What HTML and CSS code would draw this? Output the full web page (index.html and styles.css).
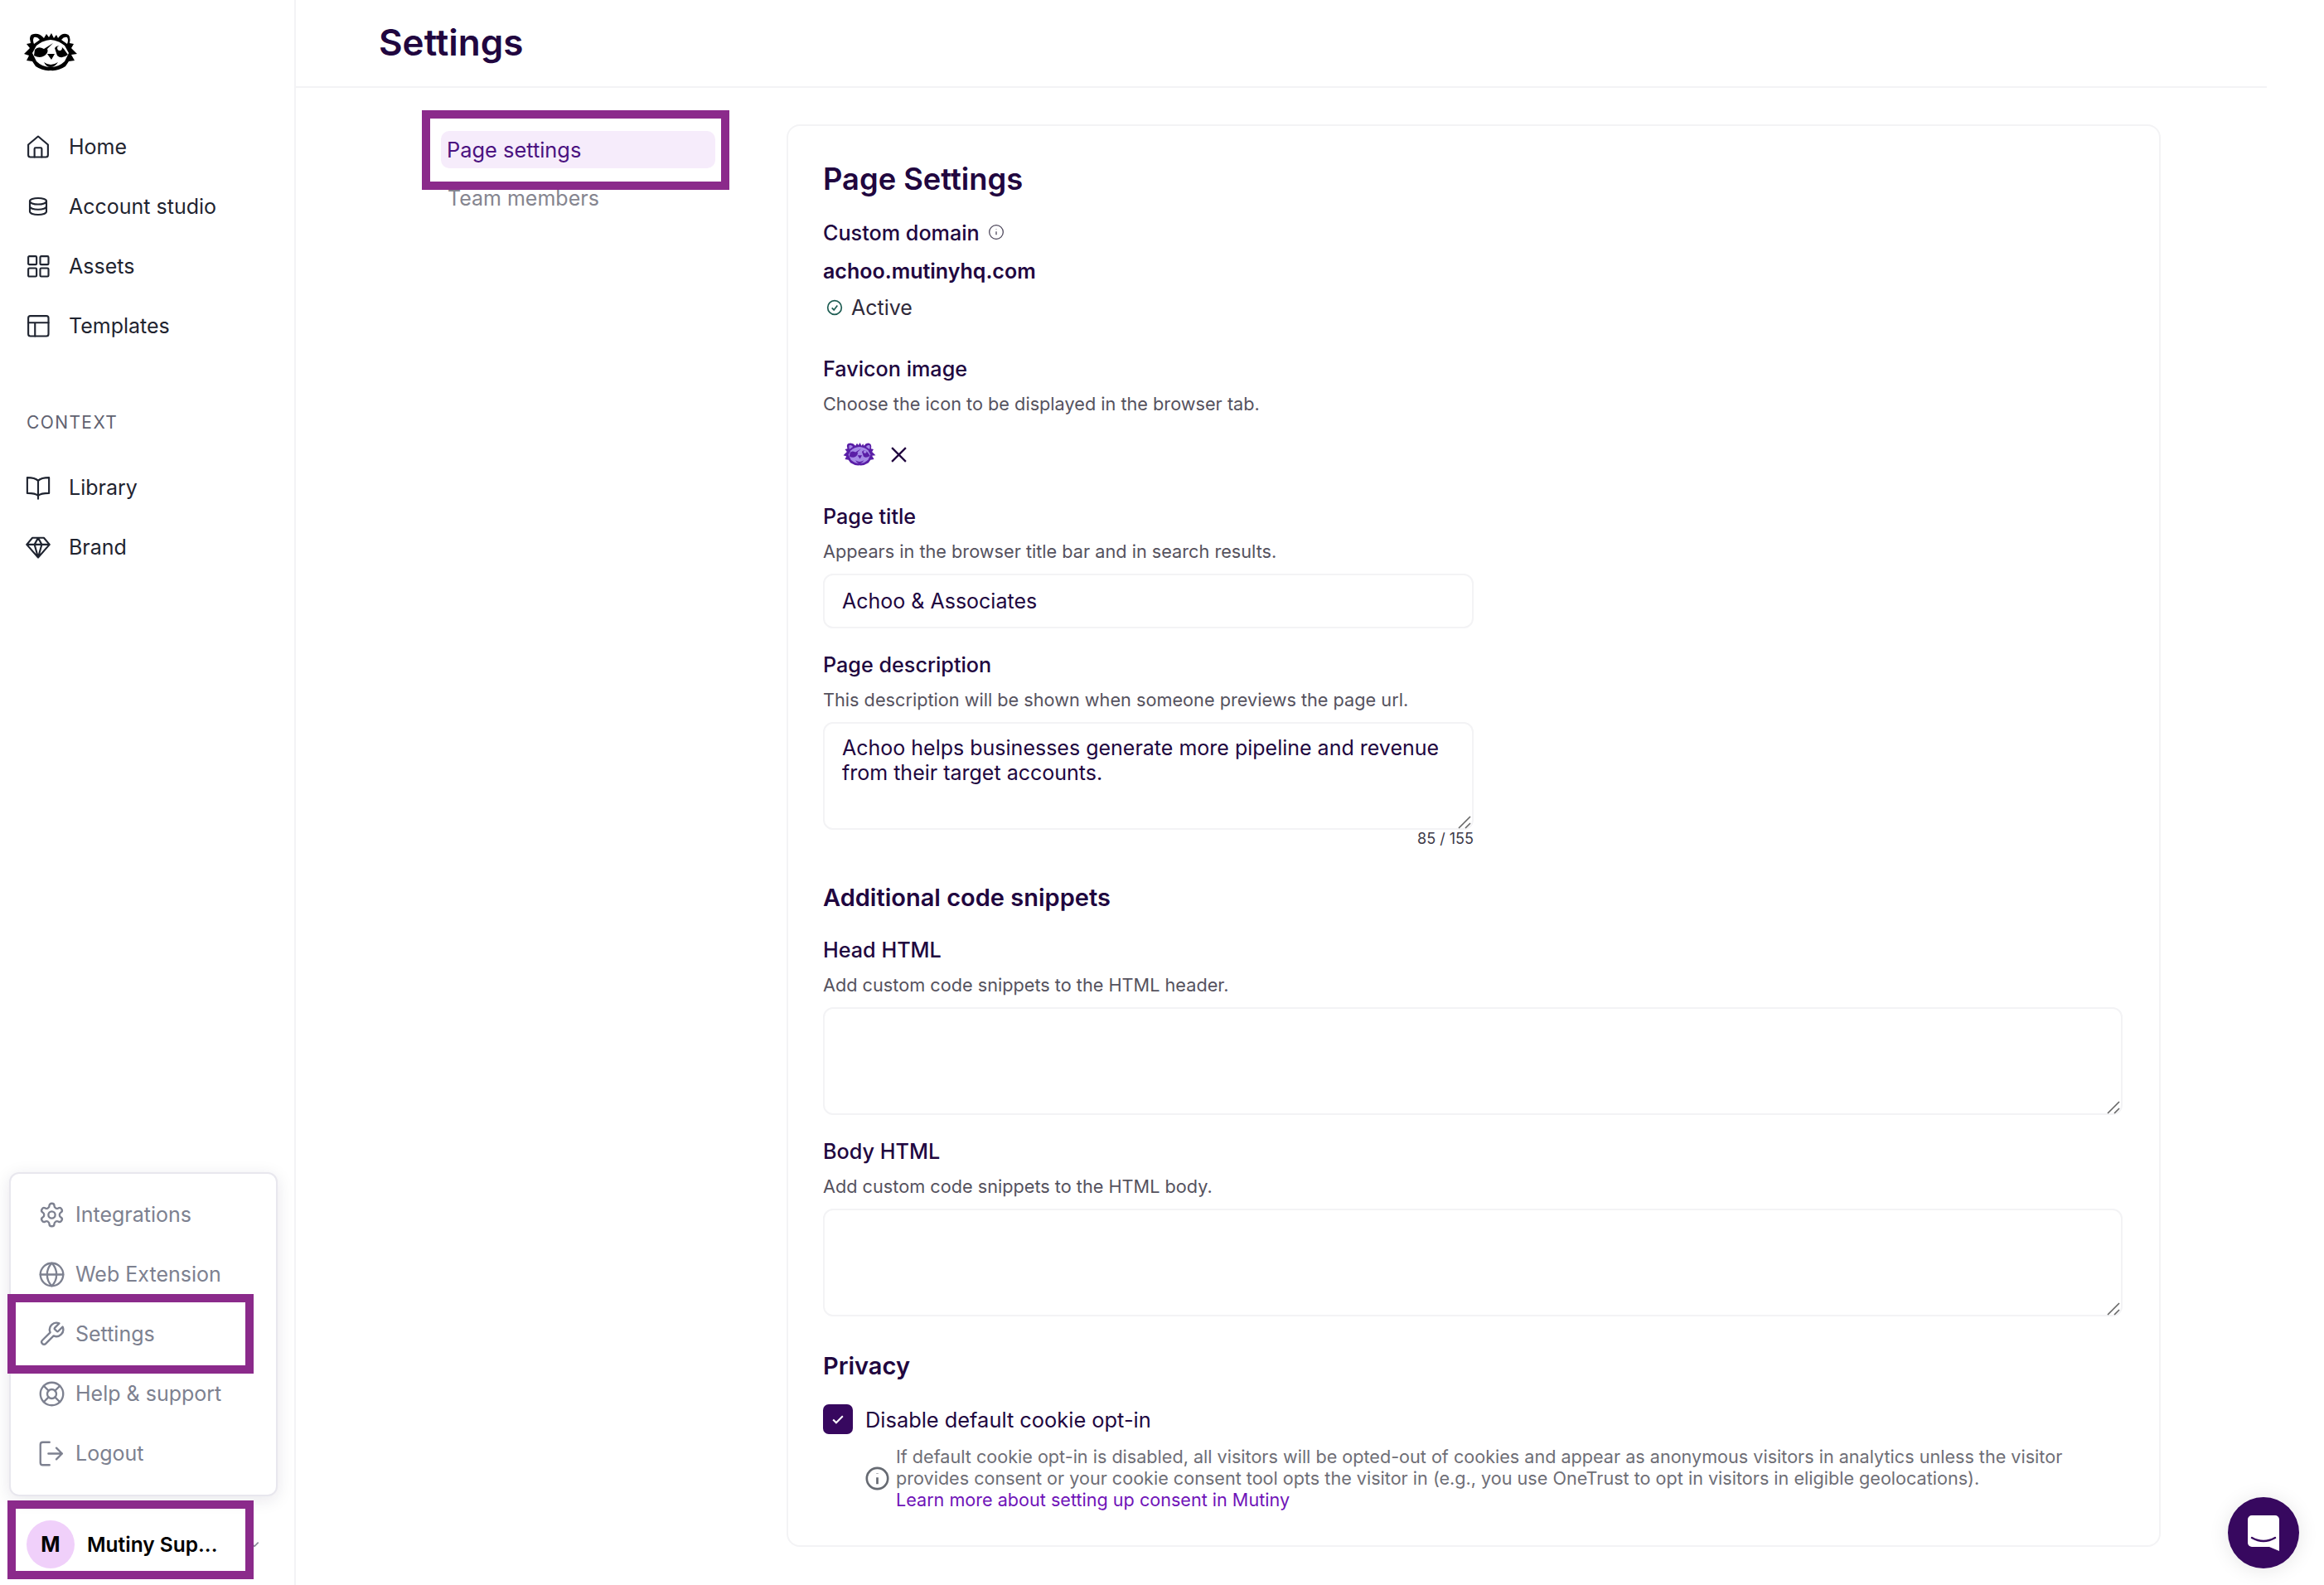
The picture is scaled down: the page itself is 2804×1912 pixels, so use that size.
FILE: index.html
```html
<!DOCTYPE html>
<html lang="en">
<head>
  <meta charset="UTF-8" />
  <meta name="viewport" content="width=device-width, initial-scale=1.0"/>
  <title>Settings</title>
  <link rel="stylesheet" href="styles.css">
</head>
<body>
  <svg class="defs" width="0" height="0">
    <symbol id="raccoon" viewBox="0 0 66 46">
      <path class="fur" d="M13 1Q8 1 8 7L9 12 4 13 8 18 1 25 7 27 4 33 11 34 15 40Q24 46 33 45 42 46 51 40L55 34 62 33 58 26 65 25 58 18 61 13 56 12Q58 2 52 1 46 0 42 6L40 2 37 6 34 0 31 5 28 1 25 6Q20 0 13 1Z"/>
      <path class="face" d="M16 15Q23 9 33 8 43 9 50 15L55 24 50 34Q43 41 33 41 23 41 16 34L11 24Z"/>
      <path class="face" d="M13 5Q11 8 13 13L20 8Q17 4 13 5ZM53 5Q55 8 53 13L46 8Q49 4 53 5Z"/>
      <path class="fur" d="M36 12 25 19Q18 15 14 20L13 27Q20 31 26 27 31 23 29 19ZM38 18Q42 12 49 19L54 26Q46 32 41 27Z"/>
      <path class="face" d="M41 18a3 3 0 1 1 0 .1Z"/>
      <path class="fur" d="M29 25H38L34 32ZM25 35Q33 41 42 35 38 41 33 41 28 41 25 35Z"/>
    </symbol>
  </svg>

  <div class="app">
    <aside class="sidebar">
      <svg class="logo"><use href="#raccoon"/></svg>

      <nav class="nav">
        <a class="nav-item">
          <svg class="icon" viewBox="0 0 24 24"><path d="M2.500 10 12 2l9.500 8v10a2 2 0 0 1-2 2h-15a2 2 0 0 1-2-2Z"/><path d="M8.500 22v-8a1 1 0 0 1 1-1h5a1 1 0 0 1 1 1v8"/></svg>
          Home
        </a>
        <a class="nav-item">
          <svg class="icon" viewBox="0 0 24 24"><ellipse cx="12" cy="7" rx="8" ry="3"/><path d="M4 7v10c0 1.700 3.600 3 8 3s8-1.300 8-3V7"/><path d="M4 12c0 1.700 3.600 3 8 3s8-1.300 8-3"/></svg>
          Account studio
        </a>
        <a class="nav-item">
          <svg class="icon" viewBox="0 0 24 24"><rect x="2.500" y="2.500" width="8" height="8" rx="1"/><rect x="14" y="2.500" width="8" height="8" rx="1"/><rect x="2.500" y="14" width="8" height="8" rx="1"/><rect x="14" y="14" width="8" height="8" rx="1"/></svg>
          Assets
        </a>
        <a class="nav-item">
          <svg class="icon" viewBox="0 0 24 24"><rect x="2.500" y="2.500" width="19.500" height="19.500" rx="2"/><path d="M2.500 9h19.500M9 9v13"/></svg>
          Templates
        </a>
      </nav>

      <div class="nav-heading">CONTEXT</div>

      <nav class="nav">
        <a class="nav-item">
          <svg class="icon" viewBox="0 0 24 24"><path d="M12 5.500C10 3.500 7 2.500 1.500 2.500v15c5.500 0 8.500.5 10.500 2.500 2-2 5-2.500 10.500-2.500v-15c-5.500 0-8.500 1-10.500 3ZM12 5.500V23"/></svg>
          Library
        </a>
        <a class="nav-item">
          <svg class="icon" viewBox="0 0 24 24"><path d="M6.500 3h11L23 9.500 12 22 1 9.500ZM1 9.500h22M8.500 9.500 12 22l3.500-12.500L12 3Z"/></svg>
          Brand
        </a>
      </nav>

      <div class="menu">
        <a class="menu-item">
          <svg class="icon" viewBox="0 0 24 24"><path d="M12.200 2h-.4a2 2 0 0 0-2 2v.2a2 2 0 0 1-1 1.700l-.4.300a2 2 0 0 1-2 0l-.2-.1a2 2 0 0 0-2.700.7l-.2.400a2 2 0 0 0 .7 2.700l.2.100a2 2 0 0 1 1 1.700v.6a2 2 0 0 1-1 1.700l-.2.100a2 2 0 0 0-.7 2.700l.2.400a2 2 0 0 0 2.700.7l.2-.1a2 2 0 0 1 2 0l.4.300a2 2 0 0 1 1 1.700v.2a2 2 0 0 0 2 2h.4a2 2 0 0 0 2-2v-.2a2 2 0 0 1 1-1.700l.4-.3a2 2 0 0 1 2 0l.2.100a2 2 0 0 0 2.700-.7l.2-.4a2 2 0 0 0-.7-2.700l-.2-.1a2 2 0 0 1-1-1.700v-.6a2 2 0 0 1 1-1.700l.2-.1a2 2 0 0 0 .7-2.700l-.2-.4a2 2 0 0 0-2.700-.7l-.2.100a2 2 0 0 1-2 0l-.4-.3a2 2 0 0 1-1-1.700V4a2 2 0 0 0-2-2Z"/><circle cx="12" cy="12" r="3"/></svg>
          Integrations
        </a>
        <a class="menu-item">
          <svg class="icon" viewBox="0 0 24 24"><circle cx="12" cy="12" r="10"/><path d="M2 12h20M12 2c5.500 5.500 5.500 14.500 0 20-5.500-5.500-5.500-14.500 0-20Z"/></svg>
          Web Extension
        </a>
        <a class="menu-item">
          <svg class="icon" viewBox="0 0 24 24"><path d="M14.700 6.300a1 1 0 0 0 0 1.400l1.600 1.600a1 1 0 0 0 1.400 0l3.800-3.800a6 6 0 0 1-7.900 7.900l-6.900 6.900a2.100 2.100 0 0 1-3-3l6.900-6.900a6 6 0 0 1 7.900-7.900Z"/></svg>
          Settings
        </a>
        <a class="menu-item">
          <svg class="icon" viewBox="0 0 24 24"><circle cx="12" cy="12" r="10"/><circle cx="12" cy="12" r="4"/><path d="m4.900 4.900 4.300 4.300M14.800 9.200l4.300-4.300M14.800 14.800l4.300 4.300M9.200 14.800l-4.300 4.300"/></svg>
          Help &amp; support
        </a>
        <a class="menu-item">
          <svg class="icon" viewBox="0 0 24 24"><path d="M10 22H4a2 2 0 0 1-2-2V4a2 2 0 0 1 2-2h6M16 17l5-5-5-5M21 12H9"/></svg>
          Logout
        </a>
      </div>

      <div class="user">
        <span class="avatar">M</span>
        <span class="user-name">Mutiny Sup...</span>
        <svg class="chevron" viewBox="0 0 12 12"><path d="m2 4 4 4 4-4"/></svg>
      </div>
    </aside>

    <main class="main">
      <header class="topbar">
        <h1>Settings</h1>
      </header>

      <div class="content">
        <nav class="subnav">
          <a class="subnav-item active">Page settings</a>
          <a class="subnav-item">Team members</a>
        </nav>

        <section class="card">
          <h2>Page Settings</h2>

          <div class="label">Custom domain
            <svg class="tip" viewBox="0 0 24 24"><circle cx="12" cy="12" r="10"/><path d="M12 16v-5M12 8v-.5"/></svg>
          </div>
          <div class="domain">achoo.mutinyhq.com</div>
          <div class="status">
            <svg class="status-icon" viewBox="0 0 24 24"><circle cx="12" cy="12" r="10"/><path d="m8 12.500 3 3 5-6.500"/></svg>
            Active
          </div>

          <div class="field">
            <div class="label">Favicon image</div>
            <div class="hint">Choose the icon to be displayed in the browser tab.</div>
            <div class="favicon">
              <svg class="favicon-img"><use href="#raccoon"/></svg>
              <svg class="favicon-x" viewBox="0 0 20 20"><path d="m2 2 16 16M18 2 2 18"/></svg>
            </div>
          </div>

          <div class="field field-title">
            <div class="label">Page title</div>
            <div class="hint">Appears in the browser title bar and in search results.</div>
            <input class="input narrow" type="text" value="Achoo &amp; Associates">
          </div>

          <div class="field field-tight">
            <div class="label">Page description</div>
            <div class="hint">This description will be shown when someone previews the page url.</div>
            <div class="area-wrap narrow">
              <textarea class="input area">Achoo helps businesses generate more pipeline and revenue from their target accounts.</textarea>
              <svg class="grip" viewBox="0 0 16 16"><path d="M1 15 15 1M9 15l6-6"/></svg>
            </div>
            <div class="count narrow">85 / 155</div>
          </div>

          <h3>Additional code snippets</h3>

          <div class="field field-snippet">
            <div class="label">Head HTML</div>
            <div class="hint">Add custom code snippets to the HTML header.</div>
            <div class="area-wrap">
              <textarea class="input area"></textarea>
              <svg class="grip" viewBox="0 0 16 16"><path d="M1 15 15 1M9 15l6-6"/></svg>
            </div>
          </div>

          <div class="field field-tight">
            <div class="label">Body HTML</div>
            <div class="hint">Add custom code snippets to the HTML body.</div>
            <div class="area-wrap">
              <textarea class="input area"></textarea>
              <svg class="grip" viewBox="0 0 16 16"><path d="M1 15 15 1M9 15l6-6"/></svg>
            </div>
          </div>

          <h3 class="privacy">Privacy</h3>

          <div class="check-row">
            <span class="checkbox"><svg viewBox="0 0 24 24"><path d="m5 12.500 4.500 4.500L19 7.500"/></svg></span>
            Disable default cookie opt-in
          </div>
          <div class="note">
            <svg class="note-icon" viewBox="0 0 24 24"><circle cx="12" cy="12" r="10.500"/><path d="M12 17.500V11M12 7.500V7"/></svg>
            <p>If default cookie opt-in is disabled, all visitors will be opted-out of cookies and appear as anonymous visitors in analytics unless the visitor provides consent or your cookie consent tool opts the visitor in (e.g., you use OneTrust to opt in visitors in eligible geolocations).<br><a class="link">Learn more about setting up consent in Mutiny</a></p>
          </div>
        </section>
      </div>
    </main>
  </div>

  <div class="mark mark-subnav"></div>
  <div class="mark mark-settings"></div>
  <div class="mark mark-user"></div>

  <div class="chat">
    <svg viewBox="0 0 38 43"><path d="M5 0h28a5 5 0 0 1 5 5v38l-12-5H5a5 5 0 0 1-5-5V5a5 5 0 0 1 5-5Z"/><path class="chat-smile" d="M5 27q14 8 28 0"/></svg>
  </div>
</body>
</html>
```

FILE: styles.css
```css
* {
  box-sizing: border-box;
}
body {
  margin: 0;
  height: 1912px;
  overflow: hidden;
  position: relative;
  background: white;
  font-family: Inter, 'Noto Sans', sans-serif;
  font-size: 25px;
  color: #21063f;
}
.defs {
  position: absolute;
}
.app {
  display: flex;
  height: 100%;
}

/* sidebar */
.sidebar {
  width: 357px;
  flex-shrink: 0;
  display: flex;
  flex-direction: column;
  border-right: 2px solid #f3f3f5;
  padding-top: 40px;
}
.logo {
  width: 66px;
  height: 46px;
  margin-left: 28px;
  margin-bottom: 55px;
}
.fur { fill: var(--fur, black); }
.face { fill: var(--face, white); }
.nav {
  display: flex;
  flex-direction: column;
}
.nav-item {
  height: 72px;
  display: flex;
  align-items: center;
  gap: 22px;
  padding-left: 31px;
  color: #1f2430;
}
.icon {
  width: 30px;
  height: 30px;
  flex-shrink: 0;
  fill: none;
  stroke: currentColor;
  stroke-width: 1.700;
  stroke-linecap: round;
  stroke-linejoin: round;
}
.nav-heading {
  margin: 61px 0 0 32px;
  height: 62px;
  line-height: 40px;
  font-size: 21px;
  letter-spacing: 1.400px;
  color: #5f6270;
}
.menu {
  margin: auto 0 0 11px;
  width: 324px;
  height: 391px;
  padding: 13px 0;
  background: white;
  border: 2px solid #e8e7ee;
  border-radius: 12px;
  box-shadow: 0 4px 20px rgba(30, 20, 60, 0.1);
  display: flex;
  flex-direction: column;
}
.menu-item {
  height: 72px;
  display: flex;
  align-items: center;
  gap: 12px;
  padding-left: 33px;
  color: #7d8190;
}
.menu-item .icon {
  width: 33px;
  height: 33px;
}
.user {
  height: 107px;
  display: flex;
  align-items: center;
  padding: 9px 0 0 32px;
}
.avatar {
  width: 58px;
  height: 58px;
  border-radius: 50%;
  background: #f0d0fa;
  color: black;
  font-weight: 700;
  display: flex;
  align-items: center;
  justify-content: center;
}
.user-name {
  margin-left: 15px;
  font-size: 24.500px;
  font-weight: 600;
  color: black;
}
.chevron {
  width: 14px;
  height: 14px;
  margin-left: 37px;
  fill: none;
  stroke: #8a8d99;
  stroke-width: 1.500;
}

/* main */
.main {
  flex: 1;
  min-width: 0;
}
.topbar {
  height: 106px;
  margin-right: 69px;
  border-bottom: 2px solid #f3f3f5;
  padding: 0 0 0 100px;
  display: flex;
  align-items: center;
}
h1 {
  margin: 0 0 2px;
  font-size: 44px;
  font-weight: 600;
}
.content {
  display: flex;
  padding-top: 44px;
}
.subnav {
  width: 592px;
  padding: 8px 0 0 175px;
  display: flex;
  flex-direction: column;
}
.subnav-item {
  width: 331px;
  height: 45px;
  line-height: 45px;
  padding-left: 8px;
  border-radius: 10px;
  color: #85858f;
}
.subnav-item.active {
  background: #f6ecfb;
  color: #4b1280;
  font-size: 25.400px;
  padding-left: 7px;
  margin-bottom: 14px;
}
.card {
  width: 1658px;
  height: 1716px;
  padding: 40px 44px 40px 42px;
  border: 2px solid #f3f3f5;
  border-radius: 16px;
}
h2 {
  margin: 0 0 23px;
  font-size: 36.300px;
  line-height: 48px;
  font-weight: 600;
}
h3 {
  margin: 38px 0 0;
  font-size: 29px;
  line-height: 44px;
  font-weight: 600;
}
.label {
  line-height: 36px;
  font-size: 25.200px;
  font-weight: 500;
}
.tip {
  width: 20px;
  height: 20px;
  margin: 0 0 6px 3px;
  vertical-align: middle;
  fill: none;
  stroke: #4a4458;
  stroke-width: 1.500;
}
.domain {
  margin-top: 10px;
  line-height: 36px;
  font-weight: 600;
}
.status {
  margin-top: 8px;
  line-height: 36px;
  display: flex;
  align-items: center;
  gap: 10px;
  padding-left: 4px;
  color: #2f2a3a;
}
.status-icon {
  width: 20px;
  height: 20px;
  fill: none;
  stroke: #1d5c52;
  stroke-width: 2;
}
.field {
  margin-top: 38px;
}
.field-title {
  margin-top: 33px;
}
.field-tight {
  margin-top: 26px;
}
.field-snippet {
  margin-top: 23px;
}
.hint {
  margin-top: 7px;
  line-height: 34px;
  font-size: 21.700px;
  color: #55525e;
}
.favicon {
  height: 48px;
  margin-top: 20px;
  display: flex;
  align-items: center;
  padding-left: 24px;
  gap: 17px;
}
.favicon-img {
  width: 40px;
  height: 30px;
  --fur: #5a1ea6;
  --face: #a58ae6;
}
.favicon-x {
  width: 21px;
  height: 21px;
  fill: none;
  stroke: #21063f;
  stroke-width: 2.200;
}
.input {
  display: block;
  width: 100%;
  margin-top: 10px;
  height: 66px;
  padding: 0 21px;
  border: 2px solid #f3f3f5;
  border-radius: 12px;
  background: white;
  font-family: inherit;
  font-size: 25px;
  color: #21063f;
  outline: none;
}
.area {
  height: 130px;
  padding: 14px 21px;
  line-height: 30px;
  resize: none;
}
.area-wrap {
  position: relative;
}
.grip {
  position: absolute;
  right: 3px;
  bottom: 1px;
  width: 16px;
  height: 16px;
  fill: none;
  stroke: #666;
  stroke-width: 1.600;
}
.narrow {
  width: 785px;
}
.count {
  text-align: right;
  font-size: 18px;
  line-height: 22px;
  color: #3d3a48;
}
.privacy {
  margin-top: 38px;
}
.check-row {
  margin-top: 24px;
  display: flex;
  align-items: center;
  gap: 15px;
  font-size: 25.400px;
}
.checkbox {
  width: 36px;
  height: 36px;
  border-radius: 7px;
  background: #37085f;
  display: flex;
  align-items: center;
  justify-content: center;
}
.checkbox svg {
  width: 20px;
  height: 20px;
  fill: none;
  stroke: white;
  stroke-width: 2.500;
}
.note {
  margin: 14px 0 0 51px;
  display: flex;
  align-items: center;
  gap: 8px;
  font-size: 21.600px;
  line-height: 26px;
  color: #6e6e76;
}
.note p {
  margin: 0;
}
.note-icon {
  width: 29px;
  height: 29px;
  flex-shrink: 0;
  fill: none;
  stroke: #666a72;
  stroke-width: 2.200;
}
.link {
  color: #6f14b8;
}

/* highlight boxes drawn over the shot */
.mark {
  position: absolute;
  border: 10px solid #8b2a8b;
  pointer-events: none;
}
.mark-subnav {
  left: 509px;
  top: 133px;
  width: 371px;
  height: 96px;
}
.mark-settings {
  left: 9px;
  top: 1561px;
  width: 297px;
  height: 96px;
}
.mark-user {
  left: 9px;
  top: 1810px;
  width: 297px;
  height: 95px;
}
.chat {
  position: absolute;
  left: 2688px;
  top: 1806px;
  width: 86px;
  height: 86px;
  border-radius: 50%;
  background: #37085f;
  box-shadow: 0 2px 24px rgba(0, 0, 0, 0.1);
  display: flex;
  align-items: center;
  justify-content: center;
}
.chat svg {
  width: 38px;
  height: 43px;
  fill: white;
}
.chat-smile {
  fill: none;
  stroke: #37085f;
  stroke-width: 2.500;
  stroke-linecap: round;
}
```
